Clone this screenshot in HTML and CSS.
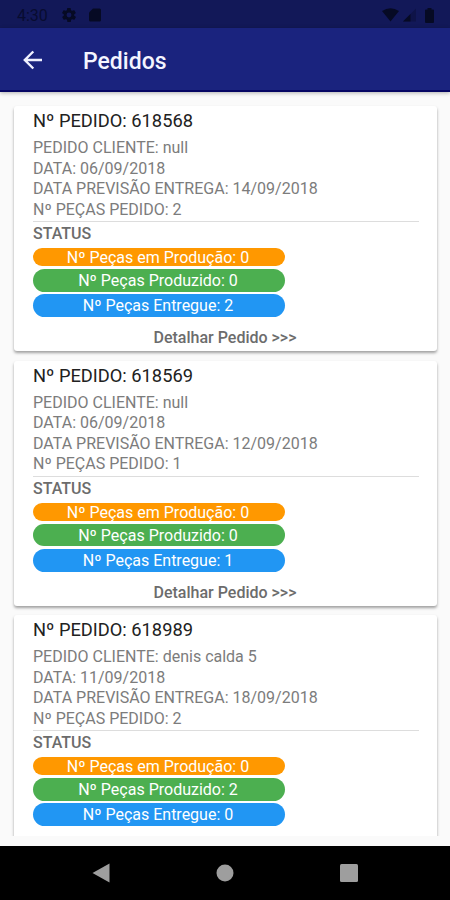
FILE: index.html
```html
<!DOCTYPE html>
<html lang="pt-BR">
<head>
    <meta charset="UTF-8">
    <meta name="viewport" content="width=device-width, initial-scale=1.0">
    <title>Pedidos</title>
    <link rel="stylesheet" href="styles.css">
</head>
<body>
    <div class="status-bar">
        <span class="clock">4:30</span>
        <svg class="icon-settings" width="14" height="14" viewBox="2 2 20 20"><path d="M19.4 13c0-.3.1-.6.1-1s0-.7-.1-1l2.1-1.6c.2-.2.3-.4.1-.7l-2-3.4c-.1-.2-.4-.3-.6-.2l-2.5 1c-.5-.4-1.1-.7-1.7-1l-.4-2.6c0-.3-.2-.5-.5-.5h-4c-.2 0-.4.2-.5.4l-.4 2.7c-.6.2-1.1.6-1.7 1l-2.5-1c-.2-.1-.5 0-.6.2l-2 3.4c-.1.2-.1.5.1.7L4.6 11c-.1.3-.1.7-.1 1s0 .7.1 1l-2.1 1.6c-.2.2-.3.4-.1.7l2 3.4c.1.2.4.3.6.2l2.5-1c.5.4 1.1.7 1.7 1l.4 2.6c0 .3.2.5.5.5h4c.2 0 .5-.2.5-.5l.4-2.6c.6-.3 1.2-.6 1.7-1l2.5 1c.2.1.5 0 .6-.2l2-3.4c.1-.2.1-.5-.1-.7L19.4 13zM12 15.5a3.5 3.5 0 1 1 0-7 3.5 3.5 0 0 1 0 7z"/></svg>
        <svg class="icon-card" width="12" height="14" viewBox="0 0 12 14"><path d="M4 .5H10.5Q12 .5 12 2V12Q12 13.5 10.5 13.5H1.500Q0 13.5 0 12V4.500Z"/></svg>
        <div class="signals">
            <svg width="17" height="14" viewBox="0 0 17 14"><path d="M0 3Q8.500-2.500 17 3L8.500 13.500Z"/></svg>
            <svg width="13" height="14" viewBox="0 0 13 14"><path d="M0 13.500L13 0.500V13.500Z" opacity=".3"/><path d="M0 13.500L7.500 6V13.500Z"/></svg>
            <svg width="9" height="15" viewBox="0 0 9 15"><path d="M2.500 0H6.500V1.500H8Q9 1.500 9 2.500V14Q9 15 8 15H1Q0 15 0 14V2.500Q0 1.500 1 1.500H2.500Z"/></svg>
        </div>
    </div>

    <div class="app-bar">
        <svg class="back" width="20" height="20" viewBox="0 0 20 20"><path d="M19 10H2M10.300 1.500L1.800 10L10.300 18.500"/></svg>
        <h1>Pedidos</h1>
    </div>

    <div class="list">
        <div class="card">
            <h2>Nº PEDIDO: 618568</h2>
            <div class="info">
                <p>PEDIDO CLIENTE: null</p>
                <p>DATA: 06/09/2018</p>
                <p>DATA PREVISÃO ENTREGA: 14/09/2018</p>
                <p>Nº PEÇAS PEDIDO: 2</p>
            </div>
            <h3>STATUS</h3>
            <div class="pill producao">Nº Peças em Produção: 0</div>
            <div class="pill produzido">Nº Peças Produzido: 0</div>
            <div class="pill entregue">Nº Peças Entregue: 2</div>
            <div class="details">Detalhar Pedido &gt;&gt;&gt;</div>
        </div>

        <div class="card">
            <h2>Nº PEDIDO: 618569</h2>
            <div class="info">
                <p>PEDIDO CLIENTE: null</p>
                <p>DATA: 06/09/2018</p>
                <p>DATA PREVISÃO ENTREGA: 12/09/2018</p>
                <p>Nº PEÇAS PEDIDO: 1</p>
            </div>
            <h3>STATUS</h3>
            <div class="pill producao">Nº Peças em Produção: 0</div>
            <div class="pill produzido">Nº Peças Produzido: 0</div>
            <div class="pill entregue">Nº Peças Entregue: 1</div>
            <div class="details">Detalhar Pedido &gt;&gt;&gt;</div>
        </div>

        <div class="card">
            <h2>Nº PEDIDO: 618989</h2>
            <div class="info">
                <p>PEDIDO CLIENTE: denis calda 5</p>
                <p>DATA: 11/09/2018</p>
                <p>DATA PREVISÃO ENTREGA: 18/09/2018</p>
                <p>Nº PEÇAS PEDIDO: 2</p>
            </div>
            <h3>STATUS</h3>
            <div class="pill producao">Nº Peças em Produção: 0</div>
            <div class="pill produzido">Nº Peças Produzido: 2</div>
            <div class="pill entregue">Nº Peças Entregue: 0</div>
        </div>
    </div>

    <div class="nav-bar">
        <svg width="18" height="20" viewBox="0 0 18 20"><path d="M17.500 0.500V19.500L0.500 10Z"/></svg>
        <svg width="18" height="18" viewBox="0 0 18 18"><circle cx="9" cy="9" r="8.500"/></svg>
        <svg width="18" height="18" viewBox="0 0 18 18"><rect width="18" height="18" rx="1.500"/></svg>
    </div>
</body>
</html>
```
FILE: styles.css
```css
* {
    box-sizing: border-box;
}
body {
    margin: 0;
    height: 900px;
    display: flex;
    flex-direction: column;
    overflow: hidden;
    font-family: Roboto, "Liberation Sans", sans-serif;
    background-color: #fafafa;
}
h1, h2, h3, p {
    margin: 0;
}
.status-bar {
    flex: none;
    display: flex;
    align-items: center;
    height: 28px;
    padding: 2px 16px 0 17px;
    background-color: #121858;
    color: #080c30;
}
.status-bar svg {
    fill: #060a24;
}
.clock {
    width: 45px;
    font-size: 16px;
}
.icon-card {
    margin-left: 13px;
}
.signals {
    display: flex;
    align-items: center;
    margin-left: auto;
}
.signals svg + svg {
    margin-left: 4px;
}
.signals svg:last-child {
    margin-left: 9px;
}
.app-bar {
    flex: none;
    display: flex;
    align-items: center;
    height: 64px;
    padding: 2px 23px 0;
    background-color: #1a237e;
    border-bottom: 2px solid #060663;
    box-shadow: 0 1px 4px rgba(0, 0, 0, 0.3);
}
.back {
    fill: none;
    stroke: #eef0ff;
    stroke-width: 2.4;
}
.app-bar h1 {
    margin-left: 40px;
    padding-top: 3px;
    font-size: 23px;
    font-weight: 500;
    color: #f4f5ff;
}
.list {
    flex: none;
    height: 744px;
    padding: 14px 13px 0 14px;
    overflow: hidden;
}
.card {
    height: 245px;
    margin-bottom: 9.5px;
    padding: 3px 18px 0 19px;
    background-color: #fff;
    border-radius: 3px;
    box-shadow: 0 2px 3px rgba(0, 0, 0, 0.36);
}
.card h2 {
    height: 28px;
    font-size: 18.3px;
    font-weight: 400;
    line-height: 24px;
    color: #212121;
}
.info {
    height: 85px;
    padding-top: 1px;
    border-bottom: 1px solid #ddd;
    font-size: 16px;
    line-height: 20.5px;
    color: #7c7c7c;
}
.card h3 {
    height: 26px;
    font-size: 16px;
    font-weight: 500;
    line-height: 23px;
    color: #6c6c6c;
}
.pill {
    width: 252px;
    padding-right: 2px;
    border-radius: 12px;
    font-size: 16px;
    text-align: center;
    color: #fff;
}
.producao {
    height: 18px;
    line-height: 19px;
    background-color: #ff9800;
}
.produzido {
    height: 22.5px;
    margin-top: 3px;
    line-height: 23px;
    background-color: #4caf50;
}
.entregue {
    height: 23px;
    margin-top: 2.5px;
    line-height: 23px;
    background-color: #2196f3;
}
.details {
    margin-top: 10px;
    padding-right: 2px;
    font-size: 16px;
    font-weight: 500;
    line-height: 22px;
    text-align: center;
    color: #6c6c6c;
}
.nav-bar {
    flex: 1;
    display: flex;
    align-items: center;
    justify-content: space-between;
    margin-top: 10px;
    padding: 0 92px;
    background-color: #000;
}
.nav-bar svg {
    fill: #9e9e9e;
}
```
